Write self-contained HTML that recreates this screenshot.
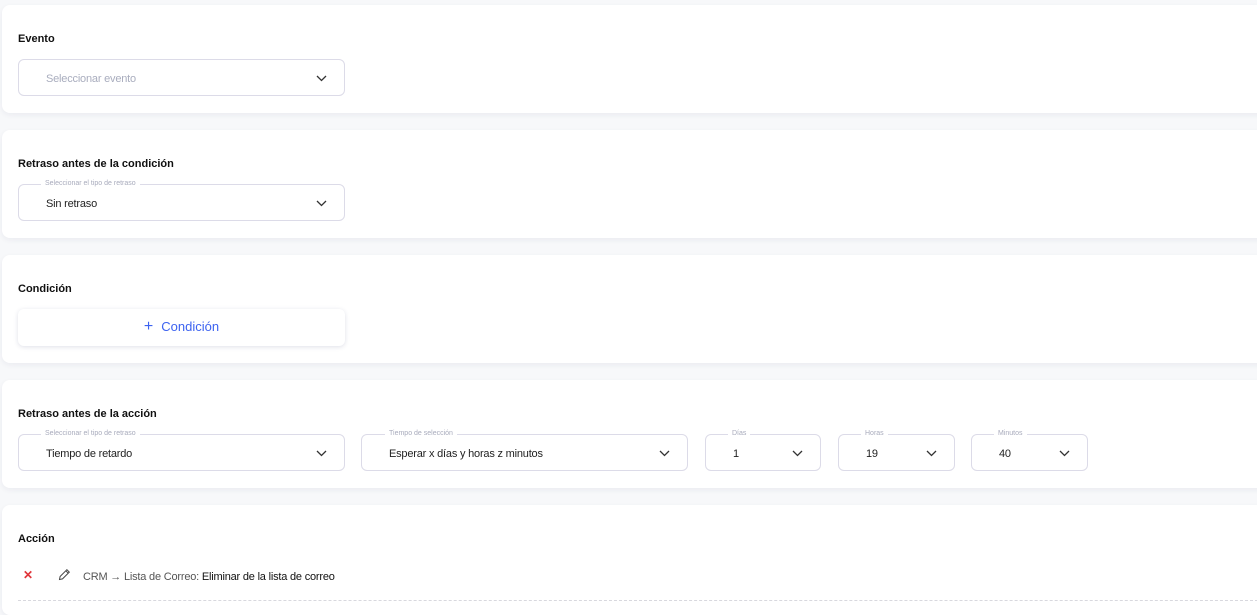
<!DOCTYPE html>
<html><head><meta charset="utf-8"><style>
*{box-sizing:border-box;margin:0;padding:0}
body{width:1257px;height:608px;overflow:hidden;background:#f7f8fa;font-family:"Liberation Sans",sans-serif;position:relative}
.card{position:absolute;left:2px;width:1270px;background:#fff;border-radius:8px;box-shadow:0 2px 6px rgba(30,40,80,0.06)}
.t{position:absolute;left:18px;font-size:11px;font-weight:bold;color:#111}
.sel{position:absolute;height:37px;border:1px solid #dcdbe8;border-radius:6px;background:#fff}
.sel .v{position:absolute;left:27px;top:12px;font-size:11px;color:#222;letter-spacing:-0.2px}
.sel .lbl{position:absolute;left:22px;top:-5px;font-size:7px;color:#a8abbc;background:#fff;padding:0 4px}
.sel svg{position:absolute;right:17px;top:15px}
</style></head><body>
<svg width="0" height="0" style="position:absolute"><defs><symbol id="ch" viewBox="0 0 11 7"><path d="M1 1l4.5 4.5L10 1" fill="none" stroke="#333" stroke-width="1.3"/></symbol></defs></svg>

<div class="card" style="top:5px;height:108px"></div>
<div class="t" style="top:33px">Evento</div>
<div class="sel" style="left:18px;top:59px;width:327px"><span class="v" style="color:#a9adbe;top:13px">Seleccionar evento</span><svg width="11" height="7"><use href="#ch"/></svg></div>

<div class="card" style="top:130px;height:108px"></div>
<div class="t" style="top:158px">Retraso antes de la condición</div>
<div class="sel" style="left:18px;top:184px;width:327px"><span class="lbl">Seleccionar el tipo de retraso</span><span class="v" style="top:13px">Sin retraso</span><svg width="11" height="7"><use href="#ch"/></svg></div>

<div class="card" style="top:255px;height:108px"></div>
<div class="t" style="top:283px">Condición</div>
<div style="position:absolute;left:18px;top:309px;width:327px;height:37px;background:#fff;border-radius:6px;box-shadow:0 1px 5px rgba(40,50,100,0.15);text-align:center;font-size:13px;color:#3d63f0;line-height:36px"><span style="font-size:16px;margin-right:8px">+</span>Condición</div>

<div class="card" style="top:380px;height:108px"></div>
<div class="t" style="top:408px">Retraso antes de la acción</div>
<div class="sel" style="left:18px;top:434px;width:327px"><span class="lbl">Seleccionar el tipo de retraso</span><span class="v" style="top:13px">Tiempo de retardo</span><svg width="11" height="7"><use href="#ch"/></svg></div>
<div class="sel" style="left:361px;top:434px;width:327px"><span class="lbl" style="left:23px">Tiempo de selección</span><span class="v" style="top:13px">Esperar x días y horas z minutos</span><svg width="11" height="7"><use href="#ch"/></svg></div>
<div class="sel" style="left:705px;top:434px;width:116px"><span class="lbl" style="left:22px">Días</span><span class="v" style="top:13px">1</span><svg width="11" height="7"><use href="#ch"/></svg></div>
<div class="sel" style="left:838px;top:434px;width:117px"><span class="lbl" style="left:22px">Horas</span><span class="v" style="top:13px">19</span><svg width="11" height="7"><use href="#ch"/></svg></div>
<div class="sel" style="left:971px;top:434px;width:117px"><span class="lbl" style="left:22px">Minutos</span><span class="v" style="top:13px">40</span><svg width="11" height="7"><use href="#ch"/></svg></div>

<div class="card" style="top:505px;height:110px"></div>
<div class="t" style="top:533px">Acción</div>
<div style="position:absolute;left:23px;top:568px;font-size:12px;font-weight:bold;color:#e0353a">✕</div>
<svg style="position:absolute;left:58px;top:568px" width="13" height="13" viewBox="0 0 13 13"><path d="M1.5 11.5l0.6-3 6.8-6.8 2.4 2.4-6.8 6.8z M7.8 2.8l2.4 2.4" fill="none" stroke="#444" stroke-width="1"/></svg>
<div style="position:absolute;left:83px;top:571px;font-size:11px;color:#555;letter-spacing:-0.2px">CRM → Lista de Correo: <span style="color:#111">Eliminar de la lista de correo</span></div>
<div style="position:absolute;left:18px;top:600px;width:1240px;border-top:1px dashed #d8d8de"></div>
</body></html>
